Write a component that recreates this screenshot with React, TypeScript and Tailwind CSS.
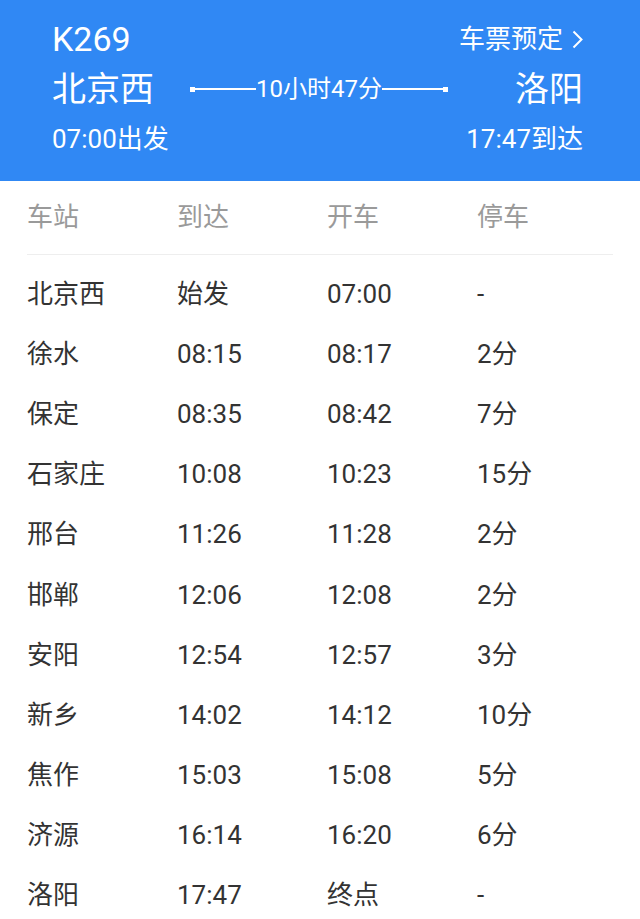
const stops = [
  { name: '北京西', arrive: '始发', depart: '07:00', stay: '-' },
  { name: '徐水', arrive: '08:15', depart: '08:17', stay: '2分' },
  { name: '保定', arrive: '08:35', depart: '08:42', stay: '7分' },
  { name: '石家庄', arrive: '10:08', depart: '10:23', stay: '15分' },
  { name: '邢台', arrive: '11:26', depart: '11:28', stay: '2分' },
  { name: '邯郸', arrive: '12:06', depart: '12:08', stay: '2分' },
  { name: '安阳', arrive: '12:54', depart: '12:57', stay: '3分' },
  { name: '新乡', arrive: '14:02', depart: '14:12', stay: '10分' },
  { name: '焦作', arrive: '15:03', depart: '15:08', stay: '5分' },
  { name: '济源', arrive: '16:14', depart: '16:20', stay: '6分' },
  { name: '洛阳', arrive: '17:47', depart: '终点', stay: '-' },
]

function Duration() {
  return (
    <div className="w-[258px] flex items-center text-white">
      <span className="w-[5px] h-[5px] bg-white shrink-0" />
      <span className="flex-1 h-[2px] bg-white" />
      <span className="text-[24px] leading-none">10小时47分</span>
      <span className="flex-1 h-[2px] bg-white" />
      <span className="w-[5px] h-[5px] bg-white shrink-0" />
    </div>
  )
}

export default function App() {
  return (
    <div
      className="w-[640px] h-[919px] overflow-hidden bg-white"
      style={{ fontFamily: 'Roboto, "Noto Sans CJK SC", sans-serif' }}
    >
      <header className="h-[181px] bg-[#3088f4] text-white pl-[52px] pr-[57px] pt-[14px]">
        <div className="h-[50px] flex items-center justify-between">
          <span className="text-[34px] leading-none">K269</span>
          <span className="flex items-center gap-[9px] text-[26px] leading-none">
            车票预定
            <svg width="11" height="19" viewBox="0 0 11 19" fill="none">
              <path d="M1.5 1.5l8 8-8 8" stroke="white" strokeWidth="2" />
            </svg>
          </span>
        </div>
        <div className="h-[50px] flex items-center">
          <span className="w-[138px] text-[34px] leading-none">北京西</span>
          <Duration />
          <span className="flex-1 text-right text-[34px] leading-none">洛阳</span>
        </div>
        <div className="h-[50px] flex items-center justify-between text-[26px] leading-none">
          <span>07:00出发</span>
          <span>17:47到达</span>
        </div>
      </header>

      <div className="px-[27px]">
        <div className="h-[74px] grid grid-cols-[150px_150px_150px_1fr] items-center text-[26px] text-[#9a9a9a] border-b border-[#eeeeee]">
          <span>车站</span>
          <span>到达</span>
          <span>开车</span>
          <span>停车</span>
        </div>
        <div className="pt-[9px]">
          {stops.map((s) => (
            <div
              key={s.name}
              className="h-[60.2px] grid grid-cols-[150px_150px_150px_1fr] items-center text-[26px] text-[#333]"
            >
              <span>{s.name}</span>
              <span>{s.arrive}</span>
              <span>{s.depart}</span>
              <span>{s.stay}</span>
            </div>
          ))}
        </div>
      </div>
    </div>
  )
}
